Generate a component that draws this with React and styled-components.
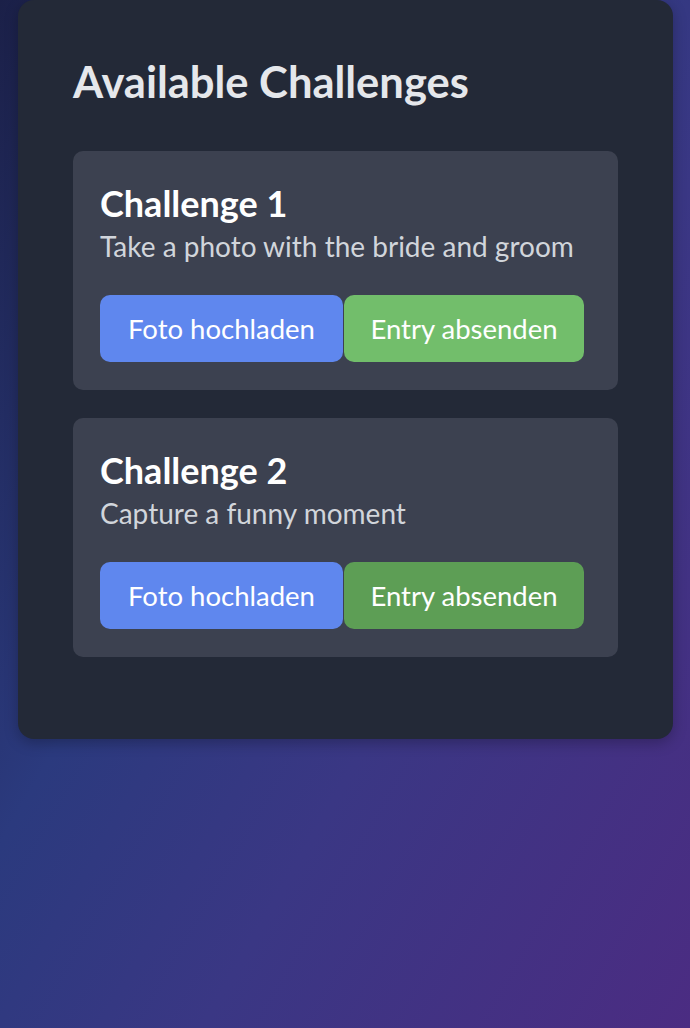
import React from 'react'
import styled, { createGlobalStyle } from 'styled-components'

const GlobalStyle = createGlobalStyle`
    * {
        box-sizing: border-box;
    }
    html, body {
        margin: 0;
        padding: 0;
        min-height: 100%;
    }
    body {
        font-family: 'Lato', 'Open Sans', sans-serif;
        background: linear-gradient(120deg, #1b2048 0%, #2b3a7e 38%, #3a3784 62%, #4b2c82 100%);
        min-height: 1028px;
    }
`;

const Page = styled.div`
    min-height: 1028px;
    padding: 0 17px 0 18px;
`;

const Panel = styled.div`
    background-color: #232937;
    border-radius: 16px;
    padding: 55px 55px 82px;
    box-shadow: 0 4px 14px rgba(0, 0, 0, 0.25);
`;

const Heading = styled.h2`
    margin: 0 0 44px;
    font-size: 43.5px;
    font-weight: 700;
    line-height: 1.2;
    color: #e5e7eb;
`;

const List = styled.div`
    display: flex;
    flex-direction: column;
    gap: 28px;
`;

const Card = styled.div`
    background-color: #3c4150;
    border-radius: 10px;
    padding: 27px 27px 28px;
`;

const CardTitle = styled.h3`
    margin: 4px 0 0;
    font-size: 36px;
    font-weight: 700;
    line-height: 1.2;
    color: #ffffff;
`;

const CardText = styled.p`
    margin: 5px 0 31px;
    font-size: 28px;
    line-height: 1.2;
    color: #d1d5db;
`;

const Actions = styled.div`
    display: flex;
    gap: 1px;
`;

const Button = styled.button`
    border: none;
    border-radius: 10px;
    height: 67px;
    padding: 0 ${(props) => props.pad || '28px'};
    font-family: inherit;
    font-size: 27.5px;
    color: #ffffff;
    background-color: ${(props) => props.bg};
    cursor: pointer;
`;

const challenges = [
    { title: 'Challenge 1', text: 'Take a photo with the bride and groom', green: '#72be6b' },
    { title: 'Challenge 2', text: 'Capture a funny moment', green: '#5d9e55' },
]

const App = () => {
  return (
    <>
        <GlobalStyle />
        <Page>
            <Panel>
                <Heading>Available Challenges</Heading>
                <List>
                {challenges.map((c) => (
                    <Card key={c.title}>
                        <CardTitle>{c.title}</CardTitle>
                        <CardText>{c.text}</CardText>
                        <Actions>
                            <Button bg="#5f87ee">Foto hochladen</Button>
                            <Button bg={c.green} pad="26.5px">Entry absenden</Button>
                        </Actions>
                    </Card>
                ))}
                </List>
            </Panel>
        </Page>
    </>
  )
}

export default App
